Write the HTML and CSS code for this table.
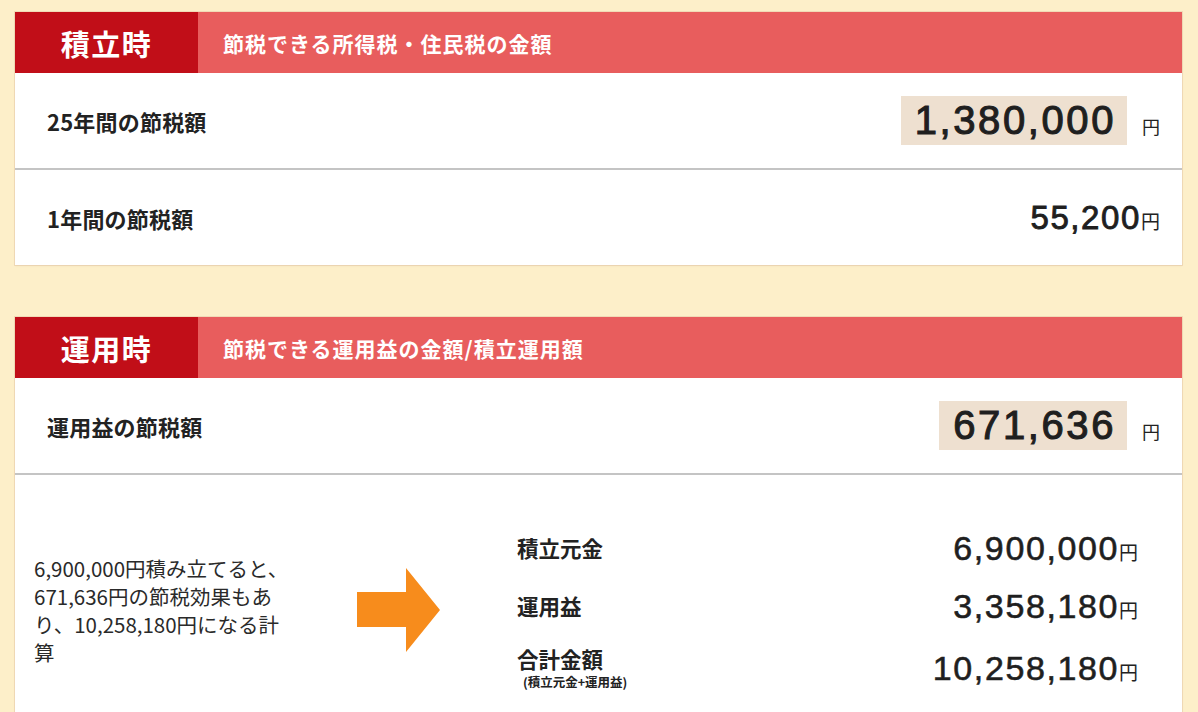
FILE: index.html
```html
<!DOCTYPE html>
<html lang="ja">
<head>
<meta charset="utf-8">
<title>節税シミュレーション</title>
<link rel="stylesheet" href="styles.css">
</head>
<body>
<section class="card card-first">
  <div class="card-head">
    <div class="head-tag">積立時</div>
    <div class="head-title">節税できる所得税・住民税の金額</div>
  </div>
  <div class="row">
    <div class="row-label">25年間の節税額</div>
    <div class="amount">
      <span class="amount-hl">1,380,000</span><span class="yen-sep">円</span>
    </div>
  </div>
  <div class="row row-divided">
    <div class="row-label">1年間の節税額</div>
    <div class="amount">
      <span class="num">55,200</span><span class="yen">円</span>
    </div>
  </div>
</section>

<section class="card card-second">
  <div class="card-head">
    <div class="head-tag">運用時</div>
    <div class="head-title">節税できる運用益の金額/積立運用額</div>
  </div>
  <div class="row">
    <div class="row-label">運用益の節税額</div>
    <div class="amount">
      <span class="amount-hl">671,636</span><span class="yen-sep">円</span>
    </div>
  </div>
  <div class="calc row-divided">
    <p class="calc-text">6,900,000円積み立てると、671,636円の節税効果もあり、10,258,180円になる計算</p>
    <svg class="calc-arrow" width="84" height="85" viewBox="0 0 84 85" aria-hidden="true">
      <polygon points="0,24 49,24 49,0 83,42 49,84 49,59 0,59" fill="#f78c1c"/>
    </svg>
    <div class="calc-table">
      <div class="calc-row">
        <div class="calc-label">積立元金</div>
        <div class="calc-value"><span class="num">6,900,000</span><span class="yen">円</span></div>
      </div>
      <div class="calc-row">
        <div class="calc-label">運用益</div>
        <div class="calc-value"><span class="num">3,358,180</span><span class="yen">円</span></div>
      </div>
      <div class="calc-row calc-row-total">
        <div class="calc-label">合計金額<span class="calc-note">(積立元金+運用益)</span></div>
        <div class="calc-value"><span class="num">10,258,180</span><span class="yen">円</span></div>
      </div>
    </div>
  </div>
</section>
</body>
</html>
```

FILE: styles.css
```css
html, body {
  margin: 0;
  padding: 0;
}

body {
  background: #fdefc9;
  font-family: "Noto Sans CJK JP", "Noto Sans", sans-serif;
  color: #222;
  overflow: hidden;
  height: 712px;
}

.card {
  margin: 0 16px 0 15px;
  background: #fff;
  box-shadow: 0 0 0 1px rgba(220, 180, 150, 0.35), 0 1px 2px rgba(0, 0, 0, 0.06);
}

.card-first {
  margin-top: 12px;
}

.card-second {
  margin-top: 52px;
}

.card-head {
  display: flex;
  height: 61px;
  background: #e85d5d;
  color: #fff;
}

.head-tag {
  width: 183px;
  flex: none;
  background: #c10e18;
  display: flex;
  align-items: center;
  justify-content: center;
  font-size: 29px;
  font-weight: 700;
  letter-spacing: 1.5px;
}

.head-title {
  display: flex;
  align-items: center;
  padding-left: 25px;
  font-size: 21px;
  font-weight: 700;
  letter-spacing: 1px;
}

.row {
  display: flex;
  align-items: center;
  justify-content: space-between;
  height: 95px;
  padding: 0 22px 0 32px;
}

.row-divided {
  border-top: 2px solid #c4c4c4;
}

.row-label {
  font-size: 22px;
  font-weight: 700;
  letter-spacing: 0.2px;
}

.amount {
  display: flex;
  align-items: baseline;
}

.amount-hl {
  background: #eee0d0;
  font-family: "Liberation Sans", Arial, sans-serif;
  font-weight: 400;
  -webkit-text-stroke: 1.1px #1f1f1f;
  font-size: 40px;
  line-height: 49px;
  letter-spacing: 2.6px;
  padding: 0 11px 0 14px;
  color: #1f1f1f;
}

.yen-sep {
  margin-left: 15px;
  font-size: 18px;
}

.num {
  font-family: "Liberation Sans", Arial, sans-serif;
  font-weight: 400;
  -webkit-text-stroke: 0.9px #1f1f1f;
  font-size: 33px;
  letter-spacing: 1.6px;
  color: #1f1f1f;
}

.yen {
  font-size: 19px;
  color: #222;
}

.calc {
  display: flex;
  align-items: center;
  height: 270px;
  padding-left: 19px;
}

.calc-text {
  margin: 0;
  width: 262px;
  font-size: 20.5px;
  line-height: 28px;
  color: #2a2a2a;
}

.calc-arrow {
  flex: none;
  margin-left: 61px;
}

.calc-table {
  margin-left: 76px;
  width: 621px;
  display: flex;
  flex-direction: column;
}

.calc-row {
  display: flex;
  align-items: center;
  justify-content: space-between;
  height: 58px;
}

.calc-row-total {
  height: 66px;
}

.calc-label {
  display: flex;
  flex-direction: column;
  font-size: 21.5px;
  font-weight: 700;
  line-height: 28px;
}

.calc-note {
  font-size: 12.5px;
  line-height: 18px;
  margin-left: 6px;
}

.calc-value {
  display: flex;
  align-items: baseline;
}

.calc-value .num {
  font-size: 34px;
  letter-spacing: 1.6px;
  -webkit-text-stroke: 0.6px #1f1f1f;
}
```
